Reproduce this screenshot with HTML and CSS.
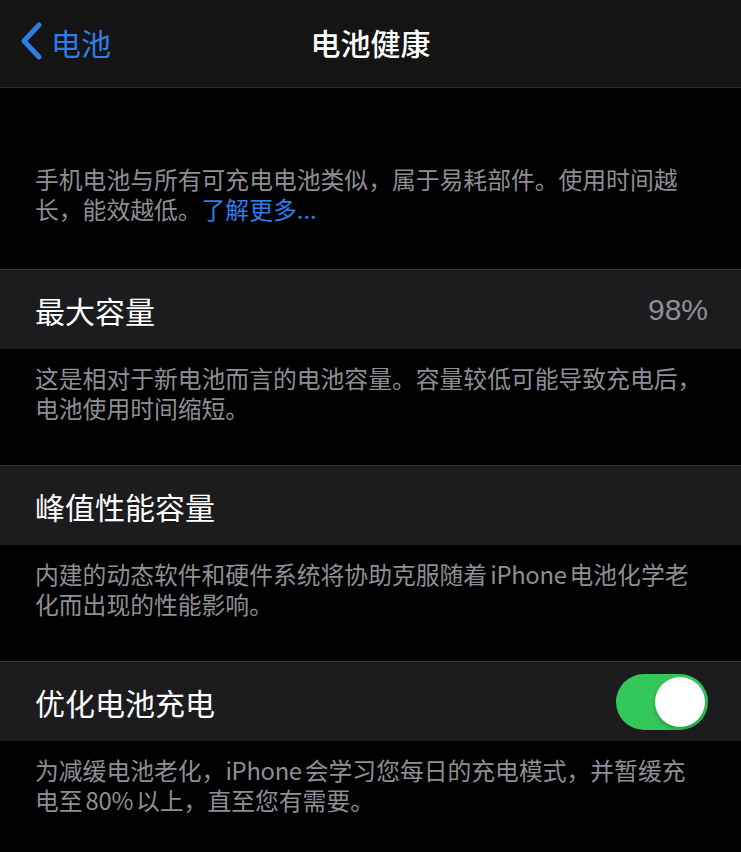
FILE: index.html
```html
<!DOCTYPE html>
<html lang="zh-CN">
<head>
<meta charset="utf-8">
<title>电池健康</title>
<link rel="stylesheet" href="styles.css">
</head>
<body>
<div class="screen">
  <header class="nav">
    <a class="back" href="#">
      <svg class="chev" width="26" height="38" viewBox="0 0 26 38"><path d="M20 3 L5 19 L20 35" fill="none" stroke="#2f7ce8" stroke-width="5" stroke-linecap="round" stroke-linejoin="round"/></svg>
      <span>电池</span>
    </a>
    <h1 class="title">电池健康</h1>
  </header>

  <p class="note note-top">手机电池与所有可充电电池类似，属于易耗部件。使用时间越<br>长，能效越低。<a class="link" href="#">了解更多...</a></p>

  <div class="cell">
    <span class="label">最大容量</span>
    <span class="value">98%</span>
  </div>
  <p class="note">这是相对于新电池而言的电池容量。容量较低可能导致充电后，<br>电池使用时间缩短。</p>

  <div class="cell">
    <span class="label">峰值性能容量</span>
  </div>
  <p class="note">内建的动态软件和硬件系统将协助克服随着<span class="en">iPhone</span>电池化学老<br>化而出现的性能影响。</p>

  <div class="cell">
    <span class="label">优化电池充电</span>
    <span class="toggle"><span class="knob"></span></span>
  </div>
  <p class="note">为减缓电池老化，<span class="en en-l">iPhone</span>会学习您每日的充电模式，并暂缓充<br>电至<span class="en">80%</span>以上，直至您有需要。</p>
</div>
</body>
</html>
```

FILE: styles.css
```css
html, body {
  margin: 0;
  padding: 0;
  background: #000;
}
body {
  font-family: "Noto Sans CJK SC", "Noto Sans", sans-serif;
  color: #fff;
}
.screen {
  width: 741px;
  height: 852px;
  overflow: hidden;
  background: #000;
}
.nav {
  height: 87px;
  background: #141414;
  border-bottom: 1px solid #2a2a2c;
  display: flex;
  align-items: center;
  justify-content: center;
  position: relative;
}
.back {
  position: absolute;
  left: 19px;
  top: 0;
  height: 87px;
  display: flex;
  align-items: center;
  gap: 6px;
  color: #2f7ce8;
  text-decoration: none;
  font-size: 30px;
}
.back span {
  line-height: 1;
  margin-top: -4px;
}
.chev {
  display: block;
  margin-top: -6px;
}
.title {
  margin: 0;
  font-size: 30px;
  font-weight: 500;
  line-height: 1;
  margin-top: -3px;
}
.note {
  margin: 0;
  padding: 14px 10px 42px 35px;
  font-size: 23.8px;
  line-height: 30px;
  color: #8e8e93;
  white-space: nowrap;
}
.note-top {
  padding-top: 76px;
  padding-bottom: 45px;
}
.en {
  margin: 0 3px;
  letter-spacing: -0.3px;
}
.en-l {
  margin-left: 0;
}
.link {
  color: #2f7ce8;
  text-decoration: none;
}
.cell {
  height: 79px;
  background: #1c1c1e;
  border-top: 1px solid #333335;
  display: flex;
  align-items: center;
  justify-content: space-between;
  padding: 0 33px 0 35px;
}
.label {
  font-size: 30px;
  line-height: 1;
  color: #fff;
}
.value {
  font-size: 30px;
  line-height: 1;
  color: #8e8e93;
  font-family: "Liberation Sans", "Noto Sans", sans-serif;
}
.toggle {
  width: 92px;
  height: 56px;
  border-radius: 28px;
  background: #34c759;
  display: flex;
  align-items: center;
  justify-content: flex-end;
  padding: 0 3px;
  box-sizing: border-box;
}
.knob {
  width: 50px;
  height: 50px;
  border-radius: 50%;
  background: #fff;
  box-shadow: 0 2px 4px rgba(0,0,0,0.25);
}
```
